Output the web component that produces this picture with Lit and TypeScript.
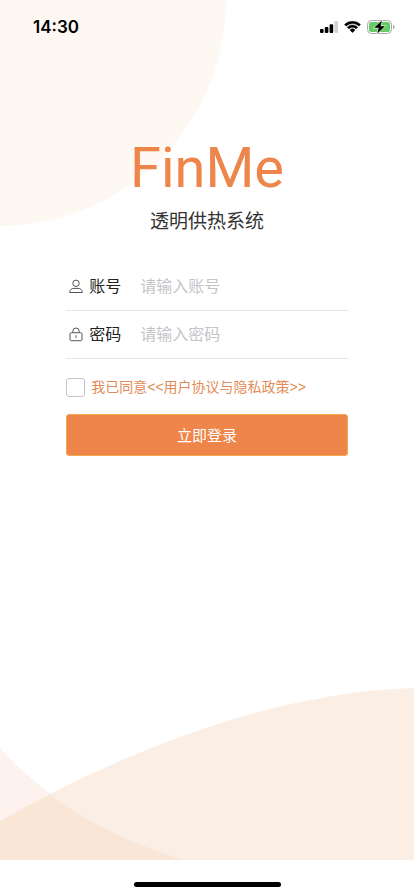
import { LitElement, html, css } from "lit";
import { customElement, state } from "lit/decorators.js";

@customElement("status-bar")
class StatusBar extends LitElement {
  static styles = css`
    :host {
      display: flex;
      justify-content: space-between;
      align-items: center;
      height: 54px;
      padding: 0 19px 0 33px;
    }
    .time {
      font: 600 17px/20px Inter, "Liberation Sans", sans-serif;
      color: #000;
    }
    .icons {
      display: flex;
      align-items: center;
      gap: 6px;
    }
    svg {
      display: block;
    }
  `;

  render() {
    return html`
      <span class="time">14:30</span>
      <span class="icons">
        <svg width="18" height="12" viewBox="0 0 18 12" aria-hidden="true">
          <rect x="0" y="8" width="3.600" height="4" rx="1" />
          <rect x="4.800" y="6" width="3.600" height="6" rx="1" />
          <rect x="9.600" y="3.200" width="3.600" height="8.800" rx="1" />
          <rect x="14.400" y="0" width="3.600" height="12" rx="1" fill="#d2d2d2" />
        </svg>
        <svg width="17" height="12" viewBox="0 0 17 12" aria-hidden="true">
          <path d="M8.500 2.500c2.300 0 4.500.9 6.200 2.500.1.100.3.100.4 0l1.200-1.200c.2-.1.2-.4 0-.5-4.300-4.200-11.300-4.200-15.600 0-.2.100-.2.400 0 .5L1.900 5c.1.100.3.100.4 0A9 9 0 0 1 8.500 2.500z" stroke="#000" stroke-width="0.400" />
          <path d="M8.500 6.400c1.300 0 2.500.5 3.400 1.300.1.100.3.100.4 0l1.200-1.200c.2-.2.2-.4 0-.5-2.800-2.700-7.200-2.700-10 0-.2.100-.2.300 0 .5l1.200 1.200c.1.100.3.100.4 0 .9-.8 2.100-1.300 3.400-1.300z" stroke="#000" stroke-width="0.400" />
          <path d="M10.900 9.200c.1-.2.1-.4 0-.5a3.600 3.600 0 0 0-4.800 0c-.1.100-.1.300 0 .5l2.200 2.200c.1.100.3.100.4 0z" stroke="#000" stroke-width="0.400" />
        </svg>
        <svg width="28" height="14" viewBox="0 0 28 14" aria-hidden="true">
          <rect x="0.500" y="0.500" width="24" height="13" rx="4" fill="#fff" stroke="#a9a9a9" />
          <rect x="2" y="2" width="21" height="10" rx="2.600" fill="#64cb67" />
          <path d="M26 4.700v4.600c.9-.4 1.500-1.300 1.500-2.300S26.900 5.100 26 4.700z" fill="#a9a9a9" />
          <path d="M14.900.6 7.200 7.800h4.500L10.300 13.400l7.700-7.200h-4.500z" stroke="#e6f6e6" stroke-width="1.200" paint-order="stroke" />
        </svg>
      </span>
    `;
  }
}

@customElement("app-root")
class AppRoot extends LitElement {
  static styles = css`
    :host {
      display: flex;
      flex-direction: column;
      min-height: 100vh;
      background: #fff;
      color: #333;
      font-family: "Liberation Sans", "Noto Sans CJK SC", sans-serif;
    }
    .page {
      position: relative;
      flex: 1;
      display: flex;
      flex-direction: column;
      overflow: hidden;
    }
    .circle,
    .waves {
      position: absolute;
      left: 0;
    }
    .circle {
      top: 0;
      width: 226px;
      height: 226px;
      border-bottom-right-radius: 100%;
      background: #fef8f2;
    }
    .waves {
      bottom: 0;
      width: 100%;
      height: 172px;
    }
    status-bar,
    main {
      position: relative;
    }
    main {
      padding: 80px 16% 0;
    }
    h1 {
      margin: 0;
      font: 400 56px/68px Roboto, "Liberation Sans", sans-serif;
      color: #ee854a;
      text-align: center;
    }
    h2 {
      margin: 6px 0 0;
      font-size: 19px;
      line-height: 28px;
      font-weight: 400;
      text-align: center;
    }
    form {
      margin-top: 27px;
    }
    .field {
      display: flex;
      align-items: center;
      height: 47px;
      border-bottom: 1px solid #e4e4e6;
    }
    .field svg {
      flex: none;
      margin: 0 5px 0 2px;
    }
    .field label {
      flex: none;
      width: 51px;
      padding-top: 1px;
      font-size: 16px;
      line-height: 24px;
      color: #222;
    }
    .field input {
      flex: 1;
      min-width: 0;
      padding: 1px 0 0;
      border: 0;
      outline: 0;
      background: none;
      font: inherit;
      font-size: 16px;
      line-height: 24px;
      color: #333;
    }
    .field input::placeholder {
      color: #c4c4c8;
      opacity: 1;
    }
    .agree {
      display: flex;
      align-items: center;
      gap: 6px;
      margin: 18px 0 17px;
      font-size: 14px;
      line-height: 20px;
      color: #e18c58;
      white-space: nowrap;
    }
    .agree input {
      appearance: none;
      flex: none;
      width: 19px;
      height: 19px;
      margin: 0;
      border: 1px solid #c4c4c8;
      border-radius: 3px;
      background: #fff;
    }
    .agree input:checked {
      background: #ee854a;
    }
    .agree a {
      color: inherit;
      text-decoration: none;
    }
    .submit {
      display: block;
      width: 100%;
      height: 42px;
      padding: 0 0 2px;
      border: 1px solid #f2aa4c;
      border-radius: 3px;
      background: #ee854a;
      color: #fff;
      font: inherit;
      font-size: 15px;
    }
    footer {
      display: flex;
      justify-content: center;
      align-items: flex-start;
      height: 14px;
      padding-top: 22px;
    }
    .home {
      width: 147px;
      height: 5px;
      border-radius: 3px;
      background: #000;
    }
  `;

  @state() private agreed = false;

  render() {
    return html`
      <div class="page">
        <div class="circle"></div>
        <svg class="waves" viewBox="0 0 414 172" preserveAspectRatio="none" aria-hidden="true">
          <path d="M0 60C42 107 102 145 182 172H0z" fill="#fdf2ed" />
          <path d="M0 133C100 76 260 4 414 0V172H0z" fill="#fbeee5" />
          <path d="M0 133Q25 119 50 107C86 134 129 154 182 172H0z" fill="#f9e6d6" />
        </svg>
        <status-bar></status-bar>
        <main>
          <h1>FinMe</h1>
          <h2>透明供热系统</h2>
          <form @submit=${(e: Event) => e.preventDefault()}>
            <div class="field">
              <svg width="16" height="16" viewBox="0 0 16 16" fill="none" stroke="#555" aria-hidden="true">
                <circle cx="8" cy="4.300" r="3.200" />
                <path d="M1.700 13.500c0-2.700 2-4.100 4.300-4.100h4c2.300 0 4.300 1.400 4.300 4.100z" stroke-linejoin="round" />
              </svg>
              <label for="account">账号</label>
              <input id="account" type="text" placeholder="请输入账号" />
            </div>
            <div class="field">
              <svg width="16" height="16" viewBox="0 0 16 16" fill="none" stroke="#555" aria-hidden="true">
                <rect x="2" y="5.700" width="12" height="8" rx="1.300" />
                <path d="M4.800 5.700V4.200a3.200 3.200 0 0 1 6.400 0v1.500M8 8.300v2.600" />
              </svg>
              <label for="password">密码</label>
              <input id="password" type="password" placeholder="请输入密码" />
            </div>
            <div class="agree">
              <input
                id="agree"
                type="checkbox"
                .checked=${this.agreed}
                @change=${() => (this.agreed = !this.agreed)}
              />
              <span><label for="agree">我已同意</label><a href="#agreement">&lt;&lt;用户协议与隐私政策&gt;&gt;</a></span>
            </div>
            <button class="submit" type="submit">立即登录</button>
          </form>
        </main>
      </div>
      <footer><div class="home"></div></footer>
    `;
  }
}
